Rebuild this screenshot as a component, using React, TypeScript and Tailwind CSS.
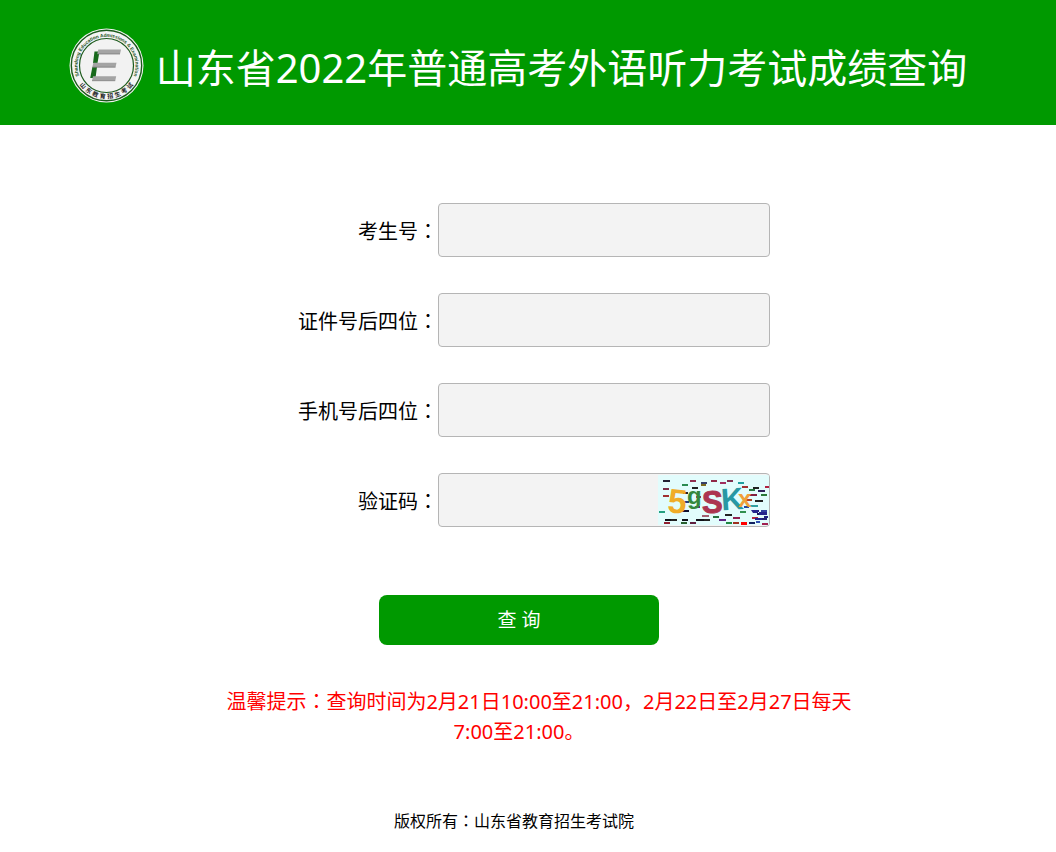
import { useState, type ReactNode } from "react";

// 全角冒号居中显示
function Colon() {
  return <span className="font-['Noto_Sans_CJK_TC',sans-serif] leading-none">：</span>;
}

const ringChars = ["山", "东", "教", "育", "招", "生", "考", "试"];

function Logo() {
  return (
    <svg className="h-[75px] w-[75px] shrink-0" viewBox="0 0 75 75" role="img" aria-label="山东教育招生考试">
      <defs>
        <path id="ring-top" d="M 11.4 50.5 A 29 29 0 1 1 63.6 50.5" />
      </defs>
      <circle cx="37.5" cy="37.5" r="37" fill="#f4f4f4" />
      <circle cx="37.5" cy="37.5" r="35.2" fill="none" stroke="#1c5a1c" strokeWidth="1.4" />
      <circle cx="37.5" cy="37.5" r="27" fill="#f2f2f2" stroke="#1c5a1c" strokeWidth="1.2" />
      <text className="font-['Liberation_Sans',sans-serif] font-bold" fontSize="4.8" fill="#185018">
        <textPath href="#ring-top" startOffset="50%" textAnchor="middle">
          Shandong Education Admissions &amp; Examination
        </textPath>
      </text>
      <g className="font-['Noto_Sans_CJK_SC',sans-serif] font-bold" fontSize="6" fill="#222" textAnchor="middle">
        {ringChars.map((c, i) => (
          <text key={c} x="37.5" y="70.5" transform={`rotate(${49 - i * 14} 37.5 37.5)`}>
            {c}
          </text>
        ))}
      </g>
      <path d="M25.5 23.5 L30.5 23.5 L28.5 35 L24 35 Z M23.4 39 L28 39 L26.5 50 L21.2 50 Z" fill="#17691b" />
      <path
        d="M29.3 21.5 L52 21.5 L51 26 L28.3 26 Z M24.3 34.8 L47.5 34.8 L46.5 39.2 L23.3 39.2 Z M24 48.2 L47.2 48.2 L46.2 52.7 L23 52.7 Z"
        fill="#a4a4a4"
      />
      <path d="M28.5 26 L51 26 M23.5 39.2 L46.5 39.2 M23 52.7 L46.2 52.7" stroke="#777" strokeWidth="0.7" />
    </svg>
  );
}

// x, y, 宽, 颜色
const specks: [number, number, number, string][] = [
  [5, 5, 7, "#223"], [32, 5, 6, "#903050"], [53, 5, 6, "#902848"], [69, 5, 6, "#803050"], [5, 13, 6, "#7a3048"],
  [24, 9, 6, "#2a8a50"], [43, 7, 6, "#34406a"], [62, 7, 6, "#a03060"], [34, 12, 6, "#222"], [43, 9, 5, "#7a6a20"],
  [80, 7, 6, "#20a0a0"], [84, 11, 6, "#a03030"], [95, 12, 6, "#222"], [107, 11, 4, "#b02040"], [91, 14, 6, "#2a7a40"],
  [100, 15, 7, "#30205a"], [5, 20, 6, "#a03030"], [25, 17, 5, "#222"], [38, 21, 5, "#a03050"],
  [90, 19, 9, "#802040"], [103, 19, 6, "#287838"], [97, 25, 8, "#222"], [88, 24, 6, "#b04020"],
  [25, 26, 6, "#223a7a"], [22, 35, 9, "#101030"], [37, 31, 5, "#702080"],
  [1, 36, 6, "#24a080"], [44, 40, 7, "#a06070"], [92, 30, 8, "#30a0a0"],
  [55, 41, 6, "#287040"], [67, 39, 7, "#222"], [75, 42, 7, "#902050"], [82, 36, 6, "#309050"], [86, 31, 5, "#2840a0"],
  [95, 35, 6, "#202080"], [99, 38, 9, "#18185a"], [103, 35, 6, "#3040a0"], [94, 42, 6, "#b02840"], [100, 43, 9, "#202070"],
  [7, 44, 6, "#101018"], [13, 44, 6, "#222"], [6, 47, 6, "#902030"], [24, 44, 6, "#101018"], [23, 47, 6, "#286030"],
  [32, 47, 6, "#602040"], [38, 44, 8, "#101018"], [46, 44, 6, "#222"], [61, 44, 7, "#602080"], [68, 47, 6, "#284"],
  [75, 47, 6, "#a03020"], [91, 47, 6, "#102060"], [98, 46, 4, "#3050b0"], [104, 48, 6, "#a02050"], [106, 41, 4, "#202080"],
];

function Captcha() {
  return (
    <svg className="h-[50px] w-[111px] shrink-0" viewBox="0 0 111 50" role="img" aria-label="验证码图片">
      <rect width="111" height="50" fill="#e2fcfc" />
      {specks.map(([x, y, w, color], i) => (
        <rect key={i} x={x} y={y} width={w} height="2" fill={color} />
      ))}
      <g className="font-['Liberation_Sans',sans-serif] font-bold">
        <text x="10" y="38" fontSize="34" fill="#f0ac28" transform="rotate(6 18 26)">5</text>
        <text x="29" y="29" fontSize="24" fill="#34883c">g</text>
        <text x="44" y="38" fontSize="31" fill="#ac3450" stroke="#ac3450">S</text>
        <text x="63" y="35" fontSize="31" fill="#2898a4" transform="rotate(-4 72 24)">K</text>
        <text x="80" y="32" fontSize="24" fill="#f0a038">x</text>
      </g>
      <rect x="83" y="47" width="6" height="3" fill="#f00" />
      <path d="M93 35h7v3h-5zM101 37h8v3h-8zM97 43h7v2h-7z" fill="#24248c" />
    </svg>
  );
}

function Field({
  id,
  label,
  value,
  onChange,
  children,
}: {
  id: string;
  label: string;
  value: string;
  onChange: (value: string) => void;
  children?: ReactNode;
}) {
  return (
    <div className="flex items-center">
      <label htmlFor={id} className="w-[140px] shrink-0 pt-1 text-right">
        {label}
        <Colon />
      </label>
      <div className="flex h-[54px] w-[332px] items-center overflow-hidden rounded border border-[#b5b5b5] bg-[#f3f3f3]">
        <input
          id={id}
          value={value}
          onChange={(e) => onChange(e.target.value)}
          className="h-full min-w-0 flex-1 bg-transparent px-2 outline-none"
        />
        {children}
      </div>
    </div>
  );
}

export default function App() {
  const [form, setForm] = useState({ ksh: "", zjh: "", sjh: "", yzm: "" });
  const update = (key: keyof typeof form) => (value: string) => setForm({ ...form, [key]: value });

  return (
    <div className="min-h-screen bg-white font-['Noto_Sans','Noto_Sans_CJK_SC',sans-serif] text-xl text-black">
      <header className="flex h-[125px] items-center justify-center gap-3 bg-[#009900] pt-1.5 pr-5">
        <Logo />
        <h1 className="pt-1 text-[40px] leading-[60px] whitespace-nowrap text-white">
          山东省2022年普通高考外语听力考试成绩查询
        </h1>
      </header>

      <main className="flex flex-col items-center pt-[78px] pr-[18px]">
        <form className="flex flex-col items-center" onSubmit={(e) => e.preventDefault()}>
          <div className="flex flex-col gap-9 pl-[30px]">
            <Field id="ksh" label="考生号" value={form.ksh} onChange={update("ksh")} />
            <Field id="zjh" label="证件号后四位" value={form.zjh} onChange={update("zjh")} />
            <Field id="sjh" label="手机号后四位" value={form.sjh} onChange={update("sjh")} />
            <Field id="yzm" label="验证码" value={form.yzm} onChange={update("yzm")}>
              <Captcha />
            </Field>
          </div>
          <button type="submit" className="mt-[68px] h-[50px] w-[280px] rounded-lg bg-[#009900] text-[19px] text-white">
            查 询
          </button>
        </form>

        <p className="mt-[42px] max-w-[680px] indent-10 text-center leading-[30px] text-[#ff0000]">
          温馨提示<Colon />查询时间为2月21日10:00至21:00，2月22日至2月27日每天7:00至21:00。
        </p>
      </main>

      <footer className="mt-[62px] pr-7 pb-4 text-center text-base leading-6">
        版权所有<Colon />山东省教育招生考试院
      </footer>
    </div>
  );
}
